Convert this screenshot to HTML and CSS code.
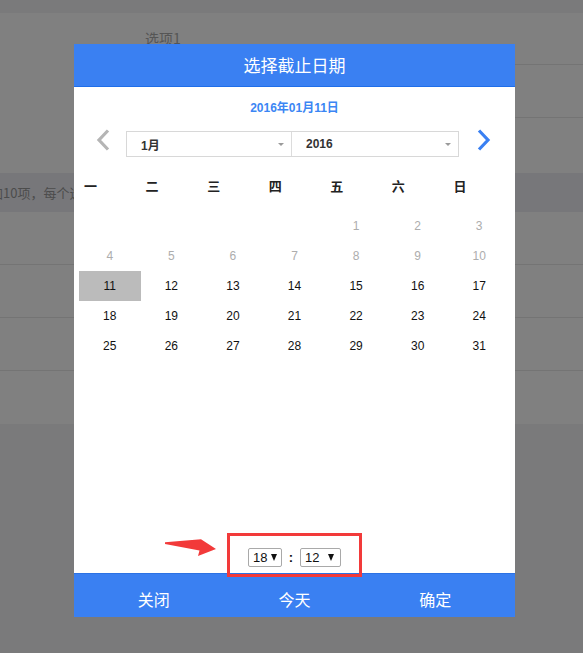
FILE: index.html
```html
<!DOCTYPE html>
<html lang="zh-CN">
<head>
<meta charset="utf-8">
<title>选择截止日期</title>
<link rel="stylesheet" href="styles.css">
</head>
<body>
<div class="page">
  <div class="topbar"></div>
  <div class="row row-first"><div class="inset"><span class="opt">选项1</span></div></div>
  <div class="row row-second"><div class="inset"></div></div>
  <div class="row row-plain"></div>
  <div class="band"><div class="band-clip"><span class="band-text">添加10项，每个选</span></div></div>
  <div class="row row-line"></div>
  <div class="row row-line"></div>
  <div class="row row-line"></div>
  <div class="row row-last"></div>
  <div class="bottom"></div>
</div>

<div class="modal">
  <div class="modal-header">选择截止日期</div>
  <div class="modal-body">
    <div class="cur-date">2016年01月11日</div>
    <div class="nav">
      <div class="nav-prev">
        <svg width="14" height="22" viewBox="0 0 14 22"><polyline points="12,1.5 3,11 12,20.5" fill="none" stroke="#b5b5b5" stroke-width="3.2"/></svg>
      </div>
      <div class="selects">
        <div class="sel sel-month"><span class="sel-text">1月</span><span class="tri"></span></div>
        <div class="sel sel-year"><span class="sel-text">2016</span><span class="tri"></span></div>
      </div>
      <div class="nav-next">
        <svg width="14" height="22" viewBox="0 0 14 22"><polyline points="2,1.5 11,11 2,20.5" fill="none" stroke="#3a80f2" stroke-width="3.2"/></svg>
      </div>
    </div>
    <div class="weekdays">
      <span>一</span><span>二</span><span>三</span><span>四</span><span>五</span><span>六</span><span>日</span>
    </div>
    <div class="days">
      <span></span><span></span><span></span><span></span>
      <span class="dim">1</span><span class="dim">2</span><span class="dim">3</span>
      <span class="dim">4</span><span class="dim">5</span><span class="dim">6</span><span class="dim">7</span><span class="dim">8</span><span class="dim">9</span><span class="dim">10</span>
      <span class="sel-day">11</span><span>12</span><span>13</span><span>14</span><span>15</span><span>16</span><span>17</span>
      <span>18</span><span>19</span><span>20</span><span>21</span><span>22</span><span>23</span><span>24</span>
      <span>25</span><span>26</span><span>27</span><span>28</span><span>29</span><span>30</span><span>31</span>
    </div>
    <div class="spacer"></div>
    <div class="time">
      <span class="tsel tsel-h"><span>18</span><span class="arr"></span></span>
      <span class="colon">:</span>
      <span class="tsel tsel-m"><span>12</span><span class="arr"></span></span>
    </div>
  </div>
  <div class="modal-footer">
    <span class="btn">关闭</span>
    <span class="btn">今天</span>
    <span class="btn">确定</span>
  </div>
</div>

<div class="annot-box"></div>
<svg class="annot-arrow" width="70" height="30" viewBox="0 0 70 30">
  <polygon points="10,12.3 46,9.3 61,19 43,26 44.5,20.5 10,14" fill="#f23a3a"/>
</svg>
</body>
</html>
```

FILE: styles.css
```css
* { box-sizing: border-box; }
html, body { margin: 0; padding: 0; }
body {
  width: 583px;
  height: 653px;
  overflow: hidden;
  background: #7b7b7c;
  font-family: "Liberation Sans", "Noto Sans CJK SC", sans-serif;
  position: relative;
}

/* dimmed page underneath */
.page { display: flex; flex-direction: column; height: 653px; background: #808080; }
.topbar { height: 13px; background: #7a7a7b; }
.row { flex: none; }
.row-first { height: 52px; }
.row-second { height: 53px; }
.row-first .inset, .row-second .inset {
  margin-left: 145px;
  height: 100%;
  border-bottom: 1px solid #747474;
  display: flex;
  align-items: center;
}
.opt { font-family: "Noto Sans CJK SC", sans-serif; font-size: 14px; color: #555; line-height: 14px; margin-top: -2px; }
.row-plain { height: 55px; }
.band { height: 39px; background: #77777a; display: flex; align-items: center; }
.band-clip { width: 74px; overflow: hidden; white-space: nowrap; }
.band-text { display: inline-block; font-family: "Noto Sans CJK SC", sans-serif; font-size: 13px; color: #4c4c4c; margin-left: -23px; }
.row-line { height: 53px; border-bottom: 1px solid #747474; }
.row-last { height: 53px; }
.bottom { flex: 1; background: #7a7a7b; }

/* modal */
.modal {
  position: absolute;
  left: 74px;
  top: 44px;
  width: 441px;
  height: 573px;
  background: #fff;
  display: flex;
  flex-direction: column;
}
.modal-header {
  height: 43px;
  background: #3a80f2;
  border-bottom: 1px solid #1f6ee9;
  color: #fff;
  font-family: "Noto Sans CJK SC", sans-serif;
  font-size: 17px;
  line-height: 42px;
  text-align: center;
}
.modal-body {
  height: 486px;
  display: flex;
  flex-direction: column;
}
.cur-date {
  padding-top: 12px;
  line-height: 18px;
  text-align: center;
  font-size: 12px;
  font-weight: bold;
  color: #3b86f4;
}
.nav {
  margin-top: 14px;
  height: 26px;
  display: flex;
}
.nav-prev { width: 52px; display: flex; justify-content: center; padding-left: 5px; margin-top: -2px; }
.nav-next { flex: 1; display: flex; justify-content: center; padding-right: 6px; margin-top: -2px; }
.selects {
  width: 333px;
  height: 26px;
  display: flex;
  border: 1px solid #d8d8d8;
}
.sel {
  height: 24px;
  display: flex;
  align-items: center;
  justify-content: space-between;
  padding: 0 7px 0 14px;
  font-size: 12px;
  font-weight: bold;
  color: #333;
}
.sel-month { width: 165px; border-right: 1px solid #dcdcdc; }
.sel-year { flex: 1; }
.tri {
  width: 0;
  height: 0;
  border-left: 3px solid transparent;
  border-right: 3px solid transparent;
  border-top: 3px solid #9a9a9a;
  margin-top: 1px;
}
.weekdays {
  margin: 13px 5px 0;
  height: 30px;
  display: grid;
  grid-template-columns: repeat(7, 1fr);
  align-items: center;
  font-family: "Noto Sans CJK SC", sans-serif;
  font-size: 13px;
  font-weight: bold;
  color: #222;
}
.weekdays span { padding-left: 5px; }
.days {
  margin: 11px 5px 0;
  display: grid;
  grid-template-columns: repeat(7, 1fr);
  grid-auto-rows: 30px;
  font-size: 12px;
  color: #111;
}
.days span { display: flex; align-items: center; justify-content: center; }
.days .dim { color: #adadad; }
.days .sel-day { background: #bbbbbb; }
.spacer { flex: 1; }
.time {
  height: 19px;
  margin-bottom: 6px;
  display: flex;
  justify-content: center;
  align-items: center;
  font-size: 13px;
  color: #111;
}
.tsel {
  height: 19px;
  border: 1px solid #a9a9a9;
  border-radius: 2px;
  display: flex;
  align-items: center;
  justify-content: space-between;
}
.tsel-h { width: 34px; padding: 0 4px 0 4px; }
.tsel-m { width: 41px; padding: 0 6px 0 4px; }
.arr {
  width: 0;
  height: 0;
  border-left: 3.5px solid transparent;
  border-right: 3.5px solid transparent;
  border-top: 7px solid #111;
}
.colon { width: 18px; text-align: center; font-weight: bold; }
.modal-footer {
  height: 44px;
  background: #3a80f2;
  border-top: 1px solid #2c72e4;
  display: flex;
  justify-content: space-evenly;
}
.btn {
  width: 122px;
  text-align: center;
  color: #fff;
  font-family: "Noto Sans CJK SC", sans-serif;
  font-size: 16px;
  padding-top: 8px;
  line-height: 34px;
}

/* annotation overlay */
.annot-box {
  position: absolute;
  left: 227px;
  top: 533px;
  width: 135px;
  height: 44px;
  border: 3px solid #f23a3a;
}
.annot-arrow { position: absolute; left: 155px; top: 530px; }
```
